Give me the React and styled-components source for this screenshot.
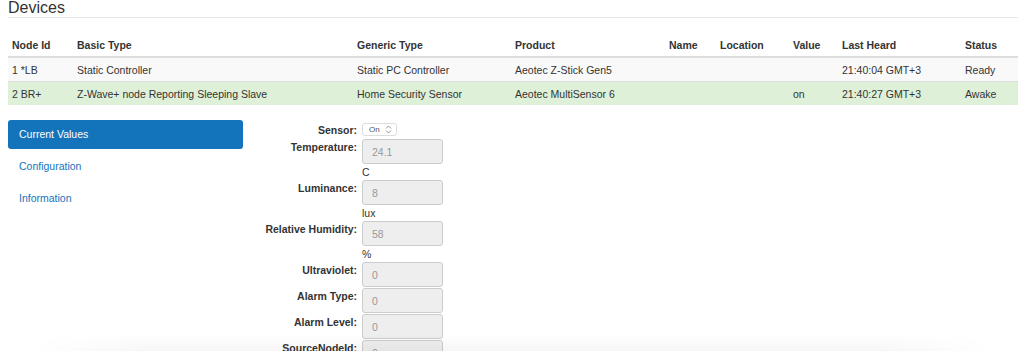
import React from 'react';
import styled, { createGlobalStyle } from 'styled-components';

const GlobalStyle = createGlobalStyle`
    html, body {
        margin: 0;
        padding: 0;
        background: #fff;
    }
    body {
        font-family: "Liberation Sans", Arial, Helvetica, sans-serif;
        font-size: 10.5px;
        color: #333;
    }
`;

const columns = [
    { key: 'node', title: 'Node Id', width: 65 },
    { key: 'basic', title: 'Basic Type', width: 280 },
    { key: 'generic', title: 'Generic Type', width: 158 },
    { key: 'product', title: 'Product', width: 154 },
    { key: 'name', title: 'Name', width: 51 },
    { key: 'location', title: 'Location', width: 73 },
    { key: 'value', title: 'Value', width: 49 },
    { key: 'heard', title: 'Last Heard', width: 123 },
    { key: 'status', title: 'Status', width: 57 },
];

const devices = [
    {
        node: '1 *LB', basic: 'Static Controller', generic: 'Static PC Controller',
        product: 'Aeotec Z-Stick Gen5', name: '', location: '', value: '',
        heard: '21:40:04 GMT+3', status: 'Ready', selected: false,
    },
    {
        node: '2 BR+', basic: 'Z-Wave+ node Reporting Sleeping Slave', generic: 'Home Security Sensor',
        product: 'Aeotec MultiSensor 6', name: '', location: '', value: 'on',
        heard: '21:40:27 GMT+3', status: 'Awake', selected: true,
    },
];

const values = [
    { label: 'Temperature:', value: '24.1', unit: 'C' },
    { label: 'Luminance:', value: '8', unit: 'lux' },
    { label: 'Relative Humidity:', value: '58', unit: '%' },
    { label: 'Ultraviolet:', value: '0' },
    { label: 'Alarm Type:', value: '0' },
    { label: 'Alarm Level:', value: '0' },
    { label: 'SourceNodeId:', value: '0' },
];

export default function App() {
    return (
        <Page>
            <GlobalStyle />
            <Title>Devices</Title>
            <Table>
                <colgroup>
                    {columns.map(c => <col key={c.key} style={{ width: c.width }} />)}
                </colgroup>
                <thead>
                    <tr>
                        {columns.map(c => <Th key={c.key}>{c.title}</Th>)}
                    </tr>
                </thead>
                <tbody>
                    {devices.map((d, i) => (
                        <Row key={d.node} $striped={i % 2 === 0} $selected={d.selected}>
                            {columns.map(c => <Td key={c.key}>{d[c.key]}</Td>)}
                        </Row>
                    ))}
                </tbody>
            </Table>
            <Details>
                <Nav>
                    <NavItem $active>Current Values</NavItem>
                    <NavItem>Configuration</NavItem>
                    <NavItem>Information</NavItem>
                </Nav>
                <Form>
                    <Field>
                        <Label>Sensor:</Label>
                        <Control>
                            <Select>
                                <span>On</span>
                                <svg width="7" height="9" viewBox="0 0 7 9">
                                    <path d="M1 3.5 L3.5 1 L6 3.5 M1 5.5 L3.5 8 L6 5.5" fill="none" stroke="#888" strokeWidth="0.9" />
                                </svg>
                            </Select>
                        </Control>
                    </Field>
                    {values.map(v => (
                        <Field key={v.label}>
                            <Label $input>{v.label}</Label>
                            <Control>
                                <Input value={v.value} disabled readOnly />
                                {v.unit && <Unit>{v.unit}</Unit>}
                            </Control>
                        </Field>
                    ))}
                </Form>
            </Details>
            <BottomShade />
        </Page>
    );
}

const Page = styled.div`
    padding: 0 6px 0 8px;
`;

const Title = styled.h3`
    margin: 0;
    font-size: 16px;
    font-weight: 400;
    line-height: 16px;
    height: 16px;
    padding-bottom: 1px;
    border-bottom: 1px solid #e8e8e8;
    color: #333;
`;

const Table = styled.table`
    width: 1010px;
    margin-top: 16px;
    border-collapse: collapse;
    table-layout: fixed;
`;

const Th = styled.th`
    height: 22px;
    padding: 0 4px;
    text-align: left;
    font-weight: 700;
    border-bottom: 2px solid #ddd;
    vertical-align: middle;
`;

const Row = styled.tr`
    background: ${p => (p.$selected ? '#dff0d8' : p.$striped ? '#f9f9f9' : '#fff')};
`;

const Td = styled.td`
    height: 23px;
    padding: 0 4px;
    border-top: 1px solid #ddd;
    vertical-align: middle;
    white-space: nowrap;
`;

const Details = styled.div`
    display: flex;
    margin-top: 15px;
`;

const Nav = styled.div`
    width: 235px;
    display: flex;
    flex-direction: column;
    gap: 3px;
`;

const NavItem = styled.div`
    height: 29px;
    line-height: 29px;
    padding-left: 11px;
    border-radius: 3px;
    color: ${p => (p.$active ? '#fff' : '#1474bb')};
    background: ${p => (p.$active ? '#1474bb' : 'transparent')};
`;

const Form = styled.div`
    padding-top: 3px;
    display: flex;
    flex-direction: column;
`;

const Field = styled.div`
    display: flex;
    align-items: flex-start;
`;

const Label = styled.div`
    width: 114px;
    margin-right: 5px;
    text-align: right;
    font-weight: 700;
    line-height: 14px;
    padding-top: ${p => (p.$input ? '1px' : '0')};
`;

const Control = styled.div`
    display: flex;
    flex-direction: column;
`;

const Select = styled.div`
    box-sizing: border-box;
    width: 35px;
    height: 13px;
    margin-bottom: 3px;
    padding: 0 4px 0 6px;
    display: flex;
    align-items: center;
    justify-content: space-between;
    border: 1px solid #ddd;
    border-radius: 3px;
    background: #fff;
    font-size: 8px;
    color: #555;
`;

const Input = styled.input`
    box-sizing: border-box;
    width: 81px;
    height: 25px;
    margin: 0 0 1px 0;
    padding: 0 9px;
    border: 1px solid #ccc;
    border-radius: 3px;
    background: #eee;
    font-family: "Liberation Sans", Arial, sans-serif;
    font-size: 10.5px;
    color: #999;
    -webkit-text-fill-color: #999;
    opacity: 1;
`;

const Unit = styled.div`
    height: 15px;
    line-height: 14px;
`;

const BottomShade = styled.div`
    position: fixed;
    left: 0;
    right: 0;
    bottom: 0;
    height: 18px;
    pointer-events: none;
    background: linear-gradient(to bottom, rgba(0, 0, 0, 0), rgba(0, 0, 0, 0.035));
    -webkit-mask-image: linear-gradient(to right, transparent 3%, #000 15%, #000 85%, transparent 97%);
    mask-image: linear-gradient(to right, transparent 3%, #000 15%, #000 85%, transparent 97%);
`;
